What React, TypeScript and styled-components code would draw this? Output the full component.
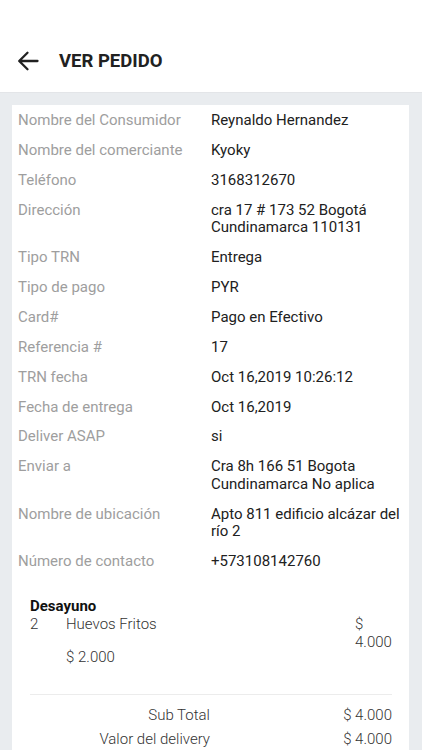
import React from 'react';
import styled, { createGlobalStyle } from 'styled-components';

const GlobalStyle = createGlobalStyle`
  html, body {
    margin: 0;
    padding: 0;
    background: #e9ecef;
    font-family: Roboto, 'Noto Sans', Arial, sans-serif;
  }
  * {
    box-sizing: border-box;
  }
`;

interface Detail {
  label: string;
  value: string;
}

const details: Detail[] = [
  { label: 'Nombre del Consumidor', value: 'Reynaldo Hernandez' },
  { label: 'Nombre del comerciante', value: 'Kyoky' },
  { label: 'Teléfono', value: '3168312670' },
  { label: 'Dirección', value: 'cra 17 # 173 52 Bogotá Cundinamarca 110131' },
  { label: 'Tipo TRN', value: 'Entrega' },
  { label: 'Tipo de pago', value: 'PYR' },
  { label: 'Card#', value: 'Pago en Efectivo' },
  { label: 'Referencia #', value: '17' },
  { label: 'TRN fecha', value: 'Oct 16,2019 10:26:12' },
  { label: 'Fecha de entrega', value: 'Oct 16,2019' },
  { label: 'Deliver ASAP', value: 'si' },
  { label: 'Enviar a', value: 'Cra 8h 166 51 Bogota Cundinamarca No aplica' },
  { label: 'Nombre de ubicación', value: 'Apto 811 edificio alcázar del río 2' },
  { label: 'Número de contacto', value: '+573108142760' },
];

const totals = [
  { label: 'Sub Total', value: '$ 4.000' },
  { label: 'Valor del delivery', value: '$ 4.000' },
];

const BackArrow = () => (
  <svg width="22" height="22" viewBox="0 0 22 22" fill="none">
    <path
      d="M20.5 11H2.5M10.5 2.8L2.2 11l8.3 8.2"
      stroke="#212121"
      strokeWidth="2.3"
      strokeLinecap="round"
      strokeLinejoin="round"
    />
  </svg>
);

export default function App() {
  return (
    <>
      <GlobalStyle />
      <Page>
        <Header>
          <BackButton>
            <BackArrow />
          </BackButton>
          <Title>VER PEDIDO</Title>
        </Header>
        <Content>
          <Card>
            {details.map((d) => (
              <DetailRow key={d.label}>
                <Label>{d.label}</Label>
                <Value>{d.value}</Value>
              </DetailRow>
            ))}
            <Items>
              <Category>Desayuno</Category>
              <ItemRow>
                <Qty>2</Qty>
                <ItemInfo>
                  <ItemName>Huevos Fritos</ItemName>
                  <UnitPrice>$ 2.000</UnitPrice>
                </ItemInfo>
                <ItemPrice>$ 4.000</ItemPrice>
              </ItemRow>
              <Divider />
              {totals.map((t) => (
                <TotalRow key={t.label}>
                  <TotalLabel>{t.label}</TotalLabel>
                  <TotalValue>{t.value}</TotalValue>
                </TotalRow>
              ))}
            </Items>
          </Card>
        </Content>
      </Page>
    </>
  );
}

const Page = styled.div`
  width: 422px;
  min-height: 750px;
  background: #e9ecef;
`;

const Header = styled.header`
  display: flex;
  align-items: center;
  height: 93px;
  padding: 49px 0 19px 17px;
  background: #fff;
  border-bottom: 1px solid #e3e5e8;
`;

const BackButton = styled.div`
  display: flex;
  align-items: center;
  width: 42px;
  height: 24px;
`;

const Title = styled.h1`
  margin: 0;
  font-size: 18.5px;
  line-height: 24px;
  font-weight: 700;
  color: #212121;
`;

const Content = styled.main`
  padding: 12px 13px 0 12px;
`;

const Card = styled.section`
  background: #fff;
  padding-top: 1px;
`;

const DetailRow = styled.div`
  display: grid;
  grid-template-columns: 193px 1fr;
  padding: 6.2px 6px;
  font-size: 15px;
  line-height: 17.5px;
`;

const Label = styled.div`
  color: #9e9e9e;
`;

const Value = styled.div`
  color: #212121;
`;

const Items = styled.div`
  padding: 20px 17px 0 18px;
`;

const Category = styled.div`
  font-size: 15px;
  line-height: 18px;
  font-weight: 700;
  color: #111;
`;

const ItemRow = styled.div`
  display: grid;
  grid-template-columns: 36px 1fr 37px;
  font-size: 15px;
  line-height: 18px;
  font-weight: 300;
  color: #333;
`;

const Qty = styled.div``;

const ItemInfo = styled.div`
  display: flex;
  flex-direction: column;
`;

const ItemName = styled.div``;

const UnitPrice = styled.div`
  margin-top: 15px;
`;

const ItemPrice = styled.div`
  word-break: keep-all;
`;

const Divider = styled.hr`
  margin: 28px 0 8px;
  border: none;
  border-top: 1px solid #ececec;
`;

const TotalRow = styled.div`
  display: grid;
  grid-template-columns: 180px 1fr;
  font-size: 15px;
  line-height: 24px;
  font-weight: 300;
  color: #333;
`;

const TotalLabel = styled.div`
  text-align: right;
`;

const TotalValue = styled.div`
  text-align: right;
`;
